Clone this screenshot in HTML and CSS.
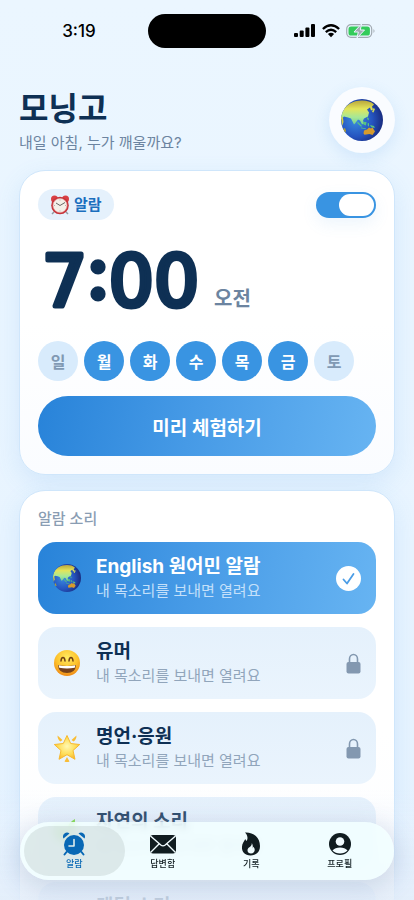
FILE: index.html
```html
<!DOCTYPE html>
<html lang="ko">
<head>
<meta charset="utf-8">
<meta name="viewport" content="width=device-width, initial-scale=1">
<title>모닝고</title>
<link rel="stylesheet" href="styles.css">
</head>
<body>
<svg class="defs" aria-hidden="true">
  <defs>
    <radialGradient id="sea" cx="35%" cy="50%" r="66%">
      <stop offset="0" stop-color="#3a8ce0"/><stop offset=".6" stop-color="#2554c0"/><stop offset="1" stop-color="#182a7d"/>
    </radialGradient>
    <linearGradient id="land" x1="0" y1="0" x2="0" y2="1">
      <stop offset="0" stop-color="#b9a63c"/><stop offset=".35" stop-color="#e3e55a"/><stop offset=".7" stop-color="#a5e898"/><stop offset="1" stop-color="#74cf92"/>
    </linearGradient>
    <radialGradient id="face" cx="50%" cy="30%" r="70%">
      <stop offset="0" stop-color="#ffec62"/><stop offset=".6" stop-color="#fdc12b"/><stop offset="1" stop-color="#ee8a17"/>
    </radialGradient>
    <radialGradient id="gold" cx="50%" cy="45%" r="60%">
      <stop offset="0" stop-color="#fff8b0"/><stop offset=".6" stop-color="#fedc55"/><stop offset="1" stop-color="#f8b227"/>
    </radialGradient>
    <clipPath id="disc"><circle cx="21" cy="21" r="21"/></clipPath>
    <symbol id="globe" viewBox="0 0 42 42">
      <circle cx="21" cy="21" r="21" fill="url(#sea)"/>
      <g clip-path="url(#disc)">
        <path fill="url(#land)" d="M0 16C3 6 12 1.500 21 1.500c5 0 9 1 12 4l-2 2 1 3-2 1-1-3-3 2 2 3-1 4-4 2-1 2 1 3-2 1-2-4-2-1-3 4-1 1-3-6-3-1-4-1-3 3z"/>
        <path fill="#d9cf45" d="M0 17l2 2 .5 4L1 27z"/>
        <path fill="#b0a038" d="M2 30l2-1 1 3-1 2z"/>
        <path fill="#57c383" d="M17 23l4 4-1 .8-4-4zM22 23l3.500 0-.5 3.500-2.500-1zM20 28.500l5 1v.8l-5-1zM26.500 24.500l1.500-.5 0 3-1 .5zM26.500 18l1.500 2-.8 1.500-1.200-2zM29 26l4 1 .8 2-3.500-.8z"/>
        <path fill="#cfd95a" d="M31 13l1.500-4 1.500 1-1.500 3.500z"/>
        <path fill="#d69b2c" d="M22.500 34.500l.5-3 3-1 2-2 2 1 1.500-1 2.500 4-2.500 3.500-3-1-5 .8z"/>
      </g>
    </symbol>
    <symbol id="lock" viewBox="0 0 15 21">
      <path d="M3.500 10V6a4 4.500 0 0 1 8 0v4" fill="none" stroke="#8398b0" stroke-width="1.600"/>
      <rect x=".5" y="9" width="14" height="11.500" rx="2" fill="#8398b0"/>
    </symbol>
  </defs>
</svg>

<div class="status">
  <span class="status-time">3:19</span>
  <span class="island"></span>
  <span class="status-icons">
    <svg width="22" height="14" viewBox="0 0 22 14" aria-hidden="true"><rect x="0" y="9" width="4" height="4" rx="1"/><rect x="5.700" y="6.500" width="4" height="6.500" rx="1"/><rect x="11.400" y="3.500" width="4" height="9.500" rx="1"/><rect x="17" y="0" width="4" height="13" rx="1"/></svg>
    <svg width="18" height="14" viewBox="0 0 18 14" aria-hidden="true"><g fill="none" stroke="#000" stroke-width="2.300"><path d="M.9 5Q9-2.400 17.100 5"/><path d="M3.800 8.200Q9 3.400 14.200 8.200"/></g><path d="M5.900 10Q9 7.500 12.100 10L9 13.200z"/></svg>
    <svg width="30" height="14" viewBox="0 0 30 14" aria-hidden="true"><rect x=".7" y=".7" width="25" height="12.600" rx="4.200" fill="none" stroke="#a2aab2" stroke-width="1.200"/><rect x="2.500" y="2.500" width="21.400" height="9" rx="2.600" fill="#34cb5b"/><path d="M27.500 5q2 1.800 0 4z" fill="#a2aab2"/><path d="M15.500 0L8 8h4.300L11 14 18.500 6h-4.200z" fill="#a2aab2" stroke="#ebf5ff" stroke-width="1"/></svg>
  </span>
</div>

<main class="page">
  <header class="header">
    <div>
      <h1>모닝고</h1>
      <p>내일 아침, 누가 깨울까요?</p>
    </div>
    <button class="globe-button" type="button" aria-label="English"><svg width="42" height="42" aria-hidden="true"><use href="#globe"/></svg></button>
  </header>

  <section class="card alarm">
    <div class="alarm-top">
      <span class="badge">
        <svg width="20" height="20" viewBox="0 0 20 20" aria-hidden="true"><path d="M4 17l-2 2M16 17l2 2" stroke="#929ba2" stroke-width="1.500"/><circle cx="4.500" cy="4" r="3.500" fill="#d93f43"/><circle cx="15.500" cy="4" r="3.500" fill="#d93f43"/><circle cx="10" cy="10.500" r="8.800" fill="#c6343a"/><circle cx="10" cy="10.500" r="7" fill="#f4f0e8" stroke="#e99c9a" stroke-width=".6"/><path d="M10 10.500L6 8M10 10.500l5-3" stroke="#444" stroke-width=".8"/><path d="M10 4.500v1M10 15.500v1M4 10.500h1M15 10.500h1" stroke="#999" stroke-width=".7"/></svg>
        알람
      </span>
      <input class="switch" type="checkbox" role="switch" aria-label="알람" checked>
    </div>
    <div class="time">
      <svg class="clock" width="172" height="90" viewBox="0 0 172 90"><text x="4" y="83">7<tspan class="colon">:</tspan>00</text></svg>
      <span class="meridiem">오전</span>
    </div>
    <div class="days">
      <button type="button" class="day">일</button>
      <button type="button" class="day on" aria-pressed="true">월</button>
      <button type="button" class="day on" aria-pressed="true">화</button>
      <button type="button" class="day on" aria-pressed="true">수</button>
      <button type="button" class="day on" aria-pressed="true">목</button>
      <button type="button" class="day on" aria-pressed="true">금</button>
      <button type="button" class="day">토</button>
    </div>
    <button class="preview" type="button">미리 체험하기</button>
  </section>

  <section class="card sounds">
    <h2>알람 소리</h2>
    <button class="sound selected" type="button">
      <svg width="28" height="28" aria-hidden="true"><use href="#globe"/></svg>
      <span class="sound-text"><strong>English 원어민 알람</strong><small>내 목소리를 보내면 열려요</small></span>
      <svg class="check" width="25" height="25" viewBox="0 0 25 25" aria-hidden="true"><circle cx="12.500" cy="12.500" r="12.500" fill="#fff"/><path d="M7.500 13.500l3.500 4 6.500-9.500" fill="none" stroke="#4b9de6" stroke-width="1.800" stroke-linecap="round" stroke-linejoin="round"/></svg>
    </button>
    <button class="sound" type="button">
      <svg width="28" height="28" viewBox="0 0 28 28" aria-hidden="true"><circle cx="14" cy="14" r="13" fill="url(#face)"/><path d="M8 12q.3-3.500 2-3.500t2 3.500M16 12q.3-3.500 2-3.500t2 3.500" fill="none" stroke="#704114" stroke-width="1.500" stroke-linecap="round"/><path d="M5 16q9 2 18 0-.5 8-9 8t-9-8z" fill="#75401b"/><path d="M5.700 16.200q8.300 1.800 16.600 0l-.5 2.500q-7.800 1.500-15.600 0z" fill="#fff"/></svg>
      <span class="sound-text"><strong>유머</strong><small>내 목소리를 보내면 열려요</small></span>
      <svg class="lock" width="15" height="21" aria-hidden="true"><use href="#lock"/></svg>
    </button>
    <button class="sound" type="button">
      <svg width="28" height="28" viewBox="0 0 28 28" aria-hidden="true"><path d="M14 1.500l3.700 8 9 1-6.700 6 2 8.800-8-4.600-8 4.600 2-8.800-6.700-6 9-1z" fill="url(#gold)" stroke="#f7b92f" stroke-width="1" stroke-linejoin="round"/><path d="M4.500 1.500l5 4.500-2 1.500q-3-2-3-6zM23.500 1.500l-5 4.500 2 1.500q3-2 3-6zM14 23l2.500 4.500q-2.500 1-5 0z" fill="#f9bd35"/></svg>
      <span class="sound-text"><strong>명언·응원</strong><small>내 목소리를 보내면 열려요</small></span>
      <svg class="lock" width="15" height="21" aria-hidden="true"><use href="#lock"/></svg>
    </button>
    <button class="sound" type="button">
      <svg width="28" height="28" viewBox="0 0 28 28" aria-hidden="true"><path d="M14 23Q0 23 1 7q9 0 13 6Q14 4 22 0q0 9-2 13-1 8-6 10z" fill="#6fd82c"/></svg>
      <span class="sound-text"><strong>자연의 소리</strong><small>내 목소리를 보내면 열려요</small></span>
    </button>
    <button class="sound" type="button">
      <span class="blank"></span>
      <span class="sound-text"><strong>랜덤 소리</strong><small>내 목소리를 보내면 열려요</small></span>
    </button>
  </section>
</main>

<nav class="tabs">
  <a class="tab active" href="#"><svg width="24" height="24" viewBox="0 0 24 24" aria-hidden="true"><circle cx="12" cy="13" r="10"/><path d="M1.500 6.500A4 4 0 0 1 7.500 1.500zM22.500 6.500a4 4 0 0 0-6-5z"/><path d="M4.500 20L2.500 22.500M19.500 20l2 2.500" stroke="currentColor" stroke-width="2" stroke-linecap="round"/><path d="M12 7.500V14H7" fill="none" stroke="#dfeceb" stroke-width="1.600" stroke-linecap="round" stroke-linejoin="round"/></svg><span>알람</span></a>
  <a class="tab" href="#"><svg width="28" height="24" viewBox="0 0 28 24" aria-hidden="true"><rect x="1" y="3" width="26" height="18.500" rx="3"/><path d="M1.500 4l10.300 9q2.200 1.800 4.400 0L26.500 4M1.500 20.500L10 12M26.500 20.500L18 12" fill="none" stroke="#f1fcff" stroke-width="1.400"/></svg><span>답변함</span></a>
  <a class="tab" href="#"><svg width="24" height="24" viewBox="0 0 24 24" aria-hidden="true"><path fill-rule="evenodd" d="M6 .5C14 0 21 5 21 14c0 6-4 9.500-9.500 9.500-5.500 0-9-3.500-8.500-9C3.300 11 5 9.500 6.300 7l1 2C9.500 7 8.500 3 6 .5zM12.800 11c.5 4-4.300 4-4.300 7.300 0 2.200 1.700 3.200 3.500 3.200 2.300 0 4-1.700 3.700-4-.2-1.300-.7-2-1.400-2.700l-.5 1.700C13.900 14 13.800 12.500 12.800 11z"/></svg><span>기록</span></a>
  <a class="tab" href="#"><svg width="24" height="24" viewBox="0 0 24 24" aria-hidden="true"><circle cx="12" cy="12" r="11"/><circle cx="12" cy="9.500" r="4.300" fill="#f1fcff"/><path d="M4.500 18.500c3-4 12-4 15 0-3.500 4-11.500 4-15 0z" fill="#f1fcff"/></svg><span>프로필</span></a>
</nav>
</body>
</html>
```
FILE: styles.css
```css
* { box-sizing: border-box; }

html { height: 100%; }

body {
  margin: 0;
  height: 100%;
  overflow-y: auto;
  scrollbar-width: none;
  background: linear-gradient(#ebf6ff, #e6f3ff);
  color: #0e3054;
  font-family: Inter, "Noto Sans CJK KR", sans-serif;
}

button {
  border: 0;
  padding: 0;
  color: inherit;
  font: inherit;
  cursor: pointer;
}

h1, h2, p { margin: 0; }

svg { display: block; flex: none; }

.defs { position: absolute; width: 0; height: 0; }

.status {
  display: grid;
  grid-template-columns: 1fr 118px 1fr;
  align-items: center;
  padding-top: 14px;
}

.status-time {
  padding-left: 10px;
  color: #000;
  font-size: 17px;
  font-weight: 500;
  line-height: 20px;
  text-align: center;
}

.island { height: 34px; border-radius: 17px; background: #000; }

.status-icons {
  display: flex;
  justify-content: center;
  gap: 6px;
  padding-right: 10px;
}

.page { padding: 39px 19px 0; }

.header {
  display: flex;
  justify-content: space-between;
  align-items: flex-start;
  min-height: 83px;
}

.header h1 {
  font-size: 32px;
  font-weight: 700;
  line-height: 44px;
}

.header p {
  margin-top: 2px;
  color: #6c84a0;
  font-size: 15px;
  line-height: 20px;
}

.globe-button {
  display: grid;
  place-items: center;
  width: 66px;
  height: 66px;
  border-radius: 50%;
  background: #fafcff;
  box-shadow: 0 5px 16px rgb(75 158 230 / 16%);
}

.card {
  margin-bottom: 15px;
  padding: 18px;
  border: 1px solid #cfe6fb;
  border-radius: 26px;
  background: linear-gradient(#fff 50%, #fafcff);
  box-shadow: 0 8px 24px rgb(75 158 230 / 14%);
}

.alarm-top {
  display: flex;
  justify-content: space-between;
  align-items: center;
}

.badge {
  display: flex;
  align-items: center;
  gap: 4px;
  padding: 4px 12px;
  border-radius: 16px;
  background: #e5f1fc;
  color: #1b6fbe;
  font-size: 15px;
  font-weight: 700;
  line-height: 23px;
}

.switch {
  appearance: none;
  display: flex;
  justify-content: flex-end;
  width: 60px;
  height: 26px;
  margin: 0;
  padding: 2px;
  border-radius: 13px;
  background: #3994e2;
  box-shadow: 0 6px 16px rgb(75 158 230 / 10%);
}

.switch::before {
  content: "";
  width: 35px;
  border-radius: 11px;
  background: #fff;
}

.switch:not(:checked) { justify-content: flex-start; background: #c9d8e6; }

.time {
  display: flex;
  align-items: flex-end;
  gap: 4px;
  height: 93px;
}

.clock { overflow: visible; }

.clock text {
  fill: #0e3054;
  stroke: #0e3054;
  stroke-width: 5px;
  stroke-linejoin: round;
  font-family: "DejaVu Sans", sans-serif;
  font-size: 71px;
  font-weight: 400;
}

.clock .colon {
  font-family: Inter, sans-serif;
  font-weight: 500;
  font-feature-settings: "case";
}

.meridiem {
  color: #6c84a0;
  font-size: 20px;
  font-weight: 600;
  line-height: 28px;
}

.days {
  display: flex;
  gap: 6px;
  margin: 28px 0 15px;
}

.day {
  width: 40px;
  height: 40px;
  border-radius: 50%;
  background: #d8ebfc;
  color: #8199b3;
  font-size: 16px;
  font-weight: 700;
}

.day.on { background: #3994e2; color: #fff; }

.preview {
  display: block;
  width: 100%;
  height: 60px;
  border-radius: 30px;
  background: linear-gradient(100deg, #2883d9, #469ae6 45%, #67b4f2);
  color: #fff;
  font-size: 19px;
  font-weight: 600;
}

.sounds {
  display: flex;
  flex-direction: column;
  gap: 13px;
}

.sounds h2 {
  color: #8a9db3;
  font-size: 15px;
  font-weight: 500;
  line-height: 20px;
}

.sound {
  display: flex;
  align-items: center;
  gap: 15px;
  min-height: 72px;
  padding: 0 15px;
  border-radius: 18px;
  background: linear-gradient(#e5f1fc, #eaf4fd);
  text-align: left;
}

.selected {
  background: linear-gradient(100deg, #2883d9, #469ae6 45%, #67b4f2);
  color: #fff;
}

.sound-text { display: grid; flex: 1; }

.sound strong { font-size: 19px; font-weight: 700; line-height: 26px; }

.sound small { color: #91a5bb; font-size: 15px; line-height: 22px; }

.selected small { color: #c4e0fa; }

.blank { width: 28px; }

.tabs {
  position: fixed;
  z-index: 1;
  right: 20px;
  bottom: 20px;
  left: 20px;
  display: grid;
  grid-template-columns: repeat(4, 1fr);
  padding: 4px 10px;
  border-radius: 29px;
  background: rgb(242 255 255 / 82%);
  box-shadow: 0 6px 24px 4px rgb(70 100 150 / 18%);
  backdrop-filter: blur(4px);
}

/* Fades the list out behind the tab bar. */
body::after {
  content: "";
  position: fixed;
  right: 0;
  bottom: 0;
  left: 0;
  height: 110px;
  background: linear-gradient(rgb(232 241 252 / 0%), rgb(232 241 252 / 30%) 40%, rgb(228 238 250 / 85%));
  pointer-events: none;
}

.tab {
  display: flex;
  flex-direction: column;
  align-items: center;
  gap: 1px;
  margin: 0 -6px;
  padding: 6px 0 5px;
  border-radius: 25px;
  color: #101c20;
  font-size: 9px;
  font-weight: 500;
  line-height: 14px;
  text-decoration: none;
}

.tab svg { fill: currentColor; }

.active { background: rgb(195 208 208 / 45%); color: #0868b5; }
```
